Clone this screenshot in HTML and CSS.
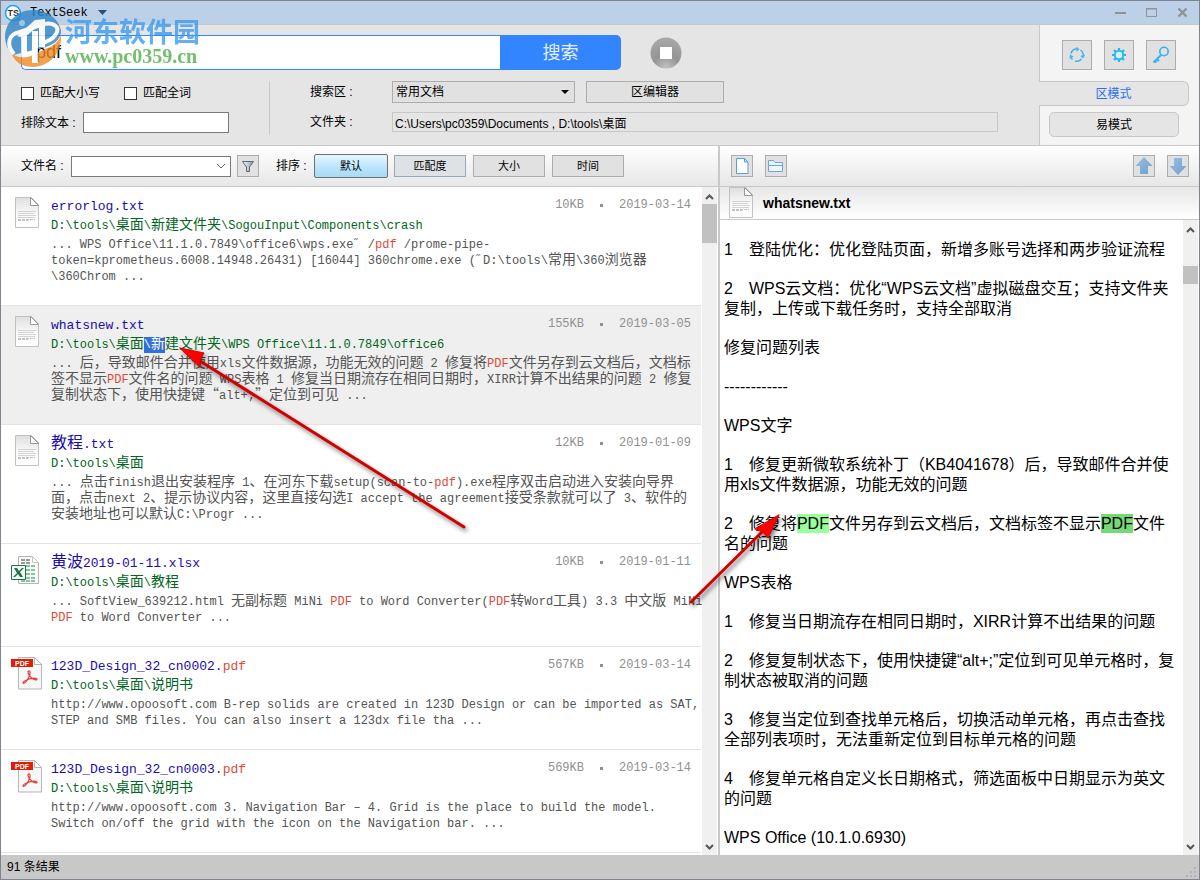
FILE: index.html
```html
<!DOCTYPE html>
<html lang="zh-CN">
<head>
<meta charset="utf-8">
<title>TextSeek</title>
<link rel="stylesheet" href="styles.css">
</head>
<body>
<svg class="defs" width="0" height="0" aria-hidden="true">
  <defs>
    <linearGradient id="paper" x1="0" y1="0" x2="0" y2="1"><stop offset="0" stop-color="#dedede"/><stop offset=".55" stop-color="#fafafa"/><stop offset="1" stop-color="#fff"/></linearGradient>
    <linearGradient id="blueArrow" x1="0" y1="0" x2="1" y2="1"><stop offset="0" stop-color="#9dbfe0"/><stop offset="1" stop-color="#6c9fd0"/></linearGradient>
    <linearGradient id="funnel" x1="0" y1="0" x2="1" y2="0"><stop offset="0" stop-color="#fff"/><stop offset="1" stop-color="#6f96bd"/></linearGradient>
    <radialGradient id="stop" cx=".5" cy="1" r=".9"><stop offset="0" stop-color="#c4c4c4"/><stop offset=".5" stop-color="#949494"/><stop offset="1" stop-color="#a6a6a6"/></radialGradient>
    <symbol id="txt" viewBox="0 0 24 32">
      <path d="M.5.5h16l7 7v23H.5z" fill="url(#paper)" stroke="#c2c2c2"/>
      <path d="M15.500.5v8h8z" fill="#fff" stroke="#999"/>
      <path d="M3 14.500h18M3 16.500h16M3 18.500h18M3 20.500h17" stroke="#d3d3d3"/>
      <path d="M3 22.500h17M3 23.500h10" stroke="#c2c2c2" stroke-dasharray="3 1"/>
    </symbol>
    <symbol id="pdf" viewBox="0 0 31 33">
      <path d="M7.500.5h16l7 7v24.500h-23z" fill="#f8f8f8" stroke="#b5b5b5"/>
      <path d="M23.500.5v7h7z" fill="#fff" stroke="#b5b5b5"/>
      <path d="M0 2h22v8H0z" fill="#df1f05"/>
      <text x="4" y="9" class="pdf-tag">PDF</text>
      <path d="M17 14.500c1.500-1.500 2.500 0 2 2.500-.8 3.500-4 9-6.500 9.500-1.500-.5.500-2.500 3-3.500 3-1.200 8.500-2.500 10.500-1 .5 1.500-2.500 1-4.500-.5-2.500-1.800-4.500-4.500-4.500-7z" fill="none" stroke="#e0443c" stroke-width="1.200"/>
    </symbol>
    <symbol id="xls" viewBox="0 0 28 28">
      <path d="M7.500.5h14l6 6v21h-20z" fill="#fafafa" stroke="#b5b5b5"/>
      <path d="M21.500.5v6h6z" fill="#fff" stroke="#c8c8c8"/>
      <path d="M10 4h10M10 7h10" stroke="#999" stroke-width="2" stroke-dasharray="4 1"/>
      <path d="M15 10h10M15 14h10M15 18h10M10 22h15M10 25h15" stroke="#86c4a0" stroke-width="2" stroke-dasharray="4 1"/>
      <path d="M.5 9.500h14v14H.5z" fill="#f4faf6" stroke="#1f7346"/>
      <path d="M3 12h3l2 3 3-3h2l-4 4 3 5H9l-2-3-3 3H2l4-4z" fill="#1f7346"/>
    </symbol>
  </defs>
</svg>

<div class="window">
  <header class="titlebar">
    <svg class="app-logo" viewBox="0 0 18 18" width="18" height="18" aria-hidden="true"><circle cx="9" cy="9" r="7.500" fill="#fff" stroke="#27a5dd" stroke-width="1.600"/><path d="M13.500 14l3 3" stroke="#27a5dd" stroke-width="2"/><text x="3.500" y="12" class="ts">TS</text></svg>
    <span class="app-name">TextSeek</span>
    <svg width="9" height="5" aria-hidden="true"><path d="M0 0h9L4.500 5z" fill="#24507c"/></svg>
    <div class="win-controls">
      <button type="button" aria-label="最小化"><svg width="12" height="12"><path d="M0 6h11" stroke="#8f9296" stroke-width="2"/></svg></button>
      <button type="button" aria-label="最大化"><svg width="12" height="12"><path d="M.5 1.500h10v8H.5zM0 2h11" fill="none" stroke="#8f9296"/></svg></button>
      <button type="button" aria-label="关闭"><svg width="12" height="12"><path d="M1.500 1.500l8 8M9.500 1.500l-8 8" stroke="#8f9296" stroke-width="2.400"/></svg></button>
    </div>
  </header>

  <section class="top">
    <form class="search">
      <div class="search-row">
        <input class="query" type="text" value="pdf" aria-label="搜索内容">
        <button class="go" type="button">搜索</button>
        <button class="stop" type="button" aria-label="停止"><svg viewBox="0 0 32 32" width="32" height="32"><circle cx="16" cy="16" r="15.500" fill="url(#stop)"/><path d="M10 10h12v12H10z" fill="#fff"/></svg></button>
      </div>
      <div class="options">
        <div class="match">
          <div class="checks">
            <label><input type="checkbox">匹配大小写</label>
            <label><input type="checkbox">匹配全词</label>
          </div>
          <div class="exclude">
            <label for="exclude">排除文本 :</label>
            <input id="exclude" class="box" type="text">
          </div>
        </div>
        <div class="zone">
          <label for="zone">搜索区 :</label>
          <div class="zone-pick">
            <select id="zone"><option>常用文档</option></select>
            <button class="flat editor" type="button">区编辑器</button>
          </div>
          <label for="folder">文件夹 :</label>
          <input id="folder" type="text" readonly value="C:\Users\pc0359\Documents , D:\tools\桌面">
        </div>
      </div>
    </form>
    <aside class="modes">
      <div class="tools">
        <button class="flat" type="button" aria-label="刷新"><svg viewBox="0 0 16 16" width="16" height="16" fill="none" stroke="#35b6f2" stroke-width="1.500"><path d="M2 6.500A6.200 6.200 0 0 1 8.500 2M11.500 3a6.200 6.200 0 0 1 2.500 6.500M12.500 12A6.200 6.200 0 0 1 6 14M3.500 12.500A6.200 6.200 0 0 1 1.800 9"/><path d="M7.500.5L9.500 2.200 7.500 4M15.500 8L14 10.500l-2-1.800M1 11.500L1.500 8.500 4 10" stroke-width="1.200"/></svg></button>
        <button class="flat" type="button" aria-label="设置"><svg viewBox="0 0 16 16" width="16" height="16"><g stroke="#22b4ea" stroke-width="2.200"><path d="M8 1v14M1 8h14M3 3l10 10M13 3L3 13"/></g><circle cx="8" cy="8" r="4.200" fill="#d4f2fc" stroke="#2cbbee" stroke-width="2"/></svg></button>
        <button class="flat" type="button" aria-label="注册"><svg viewBox="0 0 18 18" width="18" height="18" fill="none" stroke="#2fb4f3" stroke-width="1.600"><circle cx="12" cy="5.500" r="4.200"/><path d="M9 9L1.500 16.500M4.500 13l2.500 2M2.500 14l2 2.500" stroke-width="2"/></svg></button>
      </div>
      <button class="mode active" type="button">区模式</button>
      <button class="mode easy" type="button">易模式</button>
    </aside>
  </section>

  <main class="panes">
    <section class="left">
      <div class="toolbar">
        <label for="fname">文件名 :</label>
        <div class="combo"><input id="fname" type="text"><svg width="10" height="6" aria-hidden="true"><path d="M1 1l4 4 4-4" fill="none" stroke="#666"/></svg></div>
        <button class="flat icon filter" type="button" aria-label="筛选"><svg viewBox="0 0 14 14" width="14" height="14"><path d="M1.500 2.500h11L8.500 8v4.500h-3V8z" fill="url(#funnel)" stroke="#666"/></svg></button>
        <span class="sort-label">排序 :</span>
        <div class="sorts">
          <button class="flat sort on" type="button">默认</button>
          <button class="flat sort match-sort" type="button">匹配度</button>
          <button class="flat sort" type="button">大小</button>
          <button class="flat sort" type="button">时间</button>
        </div>
      </div>
      <div class="scroller">
        <div class="results">
          <article class="item">
            <svg class="ficon txt" aria-hidden="true"><use href="#txt"/></svg>
            <div class="body">
              <div class="head"><a href="#">errorlog.txt</a><span class="meta"><span>10KB</span><i></i><span>2019-03-14</span></span></div>
              <div class="path">D:\tools\<span class="zh">桌面</span>\<span class="zh">新建文件夹</span>\SogouInput\Components\crash</div>
              <p>... WPS Office\11.1.0.7849\office6\wps.exe˝ /<em>pdf</em> /prome-pipe-<br>token=kprometheus.6008.14948.26431) [16044] 360chrome.exe (˝D:\tools\<span class="zh">常用</span>\360<span class="zh">浏览器</span><br>\360Chrom ...</p>
            </div>
          </article>
          <article class="item current">
            <svg class="ficon txt" aria-hidden="true"><use href="#txt"/></svg>
            <div class="body">
              <div class="head"><a href="#">whatsnew.txt</a><span class="meta"><span>155KB</span><i></i><span>2019-03-05</span></span></div>
              <div class="path">D:\tools\<span class="zh">桌面</span><mark>\<span class="zh">新</span></mark><span class="zh">建文件夹</span>\WPS Office\11.1.0.7849\office6</div>
              <p>... <span class="zh">后，导致邮件合并使用</span>xls<span class="zh">文件数据源，功能无效的问题</span> 2 <span class="zh">修复将</span><em>PDF</em><span class="zh">文件另存到云文档后，文档标</span><br><span class="zh">签不显示</span><em>PDF</em><span class="zh">文件名的问题</span> WPS<span class="zh">表格</span> 1 <span class="zh">修复当日期流存在相同日期时，</span>XIRR<span class="zh">计算不出结果的问题</span> 2 <span class="zh">修复</span><br><span class="zh">复制状态下，使用快捷键“</span>alt+;<span class="zh">”定位到可见</span> ...</p>
            </div>
          </article>
          <article class="item">
            <svg class="ficon txt" aria-hidden="true"><use href="#txt"/></svg>
            <div class="body">
              <div class="head"><a href="#"><span class="zh">教程</span>.txt</a><span class="meta"><span>12KB</span><i></i><span>2019-01-09</span></span></div>
              <div class="path">D:\tools\<span class="zh">桌面</span></div>
              <p>... <span class="zh">点击</span>finish<span class="zh">退出安装程序</span> 1<span class="zh">、在河东下载</span>setup(scan-to-<em>pdf</em>).exe<span class="zh">程序双击启动进入安装向导界</span><br><span class="zh">面，点击</span>next 2<span class="zh">、提示协议内容，这里直接勾选</span>I accept the agreement<span class="zh">接受条款就可以了</span> 3<span class="zh">、软件的</span><br><span class="zh">安装地址也可以默认</span>C:\Progr ...</p>
            </div>
          </article>
          <article class="item">
            <svg class="ficon xls" aria-hidden="true"><use href="#xls"/></svg>
            <div class="body">
              <div class="head"><a href="#"><span class="zh">黄波</span>2019-01-11.xlsx</a><span class="meta"><span>10KB</span><i></i><span>2019-01-11</span></span></div>
              <div class="path">D:\tools\<span class="zh">桌面</span>\<span class="zh">教程</span></div>
              <p>... SoftView_639212.html <span class="zh">无副标题</span> MiNi <em>PDF</em> to Word Converter(<em>PDF</em><span class="zh">转</span>Word<span class="zh">工具</span>) 3.3 <span class="zh">中文版</span> MiNi<br><em>PDF</em> to Word Converter ...</p>
            </div>
          </article>
          <article class="item">
            <svg class="ficon pdf" aria-hidden="true"><use href="#pdf"/></svg>
            <div class="body">
              <div class="head"><a href="#">123D_Design_32_cn0002.<em>pdf</em></a><span class="meta"><span>567KB</span><i></i><span>2019-03-14</span></span></div>
              <div class="path">D:\tools\<span class="zh">桌面</span>\<span class="zh">说明书</span></div>
              <p>http://www.opoosoft.com B-rep solids are created in 123D Design or can be imported as SAT,<br>STEP and SMB files. You can also insert a 123dx file tha ...</p>
            </div>
          </article>
          <article class="item">
            <svg class="ficon pdf" aria-hidden="true"><use href="#pdf"/></svg>
            <div class="body">
              <div class="head"><a href="#">123D_Design_32_cn0003.<em>pdf</em></a><span class="meta"><span>569KB</span><i></i><span>2019-03-14</span></span></div>
              <div class="path">D:\tools\<span class="zh">桌面</span>\<span class="zh">说明书</span></div>
              <p>http://www.opoosoft.com 3. Navigation Bar – 4. Grid is the place to build the model.<br>Switch on/off the grid with the icon on the Navigation bar. ...</p>
            </div>
          </article>
        </div>
        <div class="bar" aria-hidden="true">
          <svg width="9" height="6"><path d="M1 5l3.500-3.500L8 5" fill="none" stroke="#555" stroke-width="2"/></svg>
          <div class="thumb tall"></div>
          <svg width="9" height="6"><path d="M1 1l3.500 3.500L8 1" fill="none" stroke="#555" stroke-width="2"/></svg>
        </div>
      </div>
    </section>

    <section class="right">
      <div class="toolbar preview-tools">
        <button class="flat icon" type="button" aria-label="打开文件"><svg viewBox="0 0 14 16" width="14" height="16"><path d="M1.500.5h8l3.500 3.500v11.500H1.500zM9.500.5v3.500h3.500" fill="#fff" stroke="#559bf0"/></svg></button>
        <button class="flat icon" type="button" aria-label="打开文件夹"><svg viewBox="0 0 16 14" width="16" height="14"><path d="M.5 12.500v-11h5l1.500 2h7.500v9zM.5 6.500h14" fill="#f0f5fb" stroke="#6ba6ec"/></svg></button>
        <button class="flat icon push" type="button" aria-label="上一个"><svg viewBox="0 0 18 18" width="18" height="18"><path d="M9 0l8.500 9H13v8H5V9H.5z" fill="url(#blueArrow)"/></svg></button>
        <button class="flat icon" type="button" aria-label="下一个"><svg viewBox="0 0 18 18" width="18" height="18"><path d="M9 18L.5 9H5V1h8v8h4.500z" fill="url(#blueArrow)"/></svg></button>
      </div>
      <div class="doc-head">
        <svg class="ficon txt" aria-hidden="true"><use href="#txt"/></svg>
        <h1>whatsnew.txt</h1>
      </div>
      <div class="scroller">
        <div class="doc">
          <p>1　登陆优化：优化登陆页面，新增多账号选择和两步验证流程</p>
          <p>2　WPS云文档：优化“WPS云文档”虚拟磁盘交互；支持文件夹<br>复制，上传或下载任务时，支持全部取消</p>
          <p>修复问题列表</p>
          <p>------------</p>
          <p>WPS文字</p>
          <p>1　修复更新微软系统补丁（KB4041678）后，导致邮件合并使<br>用xls文件数据源，功能无效的问题</p>
          <p>2　修复将<mark>PDF</mark>文件另存到云文档后，文档标签不显示<mark class="deep">PDF</mark>文件<br>名的问题</p>
          <p>WPS表格</p>
          <p>1　修复当日期流存在相同日期时，XIRR计算不出结果的问题</p>
          <p>2　修复复制状态下，使用快捷键“alt+;”定位到可见单元格时，复<br>制状态被取消的问题</p>
          <p>3　修复当定位到查找单元格后，切换活动单元格，再点击查找<br>全部列表项时，无法重新定位到目标单元格的问题</p>
          <p>4　修复单元格自定义长日期格式，筛选面板中日期显示为英文<br>的问题</p>
          <p>WPS Office (10.1.0.6930)</p>
        </div>
        <div class="bar" aria-hidden="true">
          <svg width="9" height="6"><path d="M1 5l3.500-3.500L8 5" fill="none" stroke="#555" stroke-width="2"/></svg>
          <div class="thumb low"></div>
          <svg width="9" height="6"><path d="M1 1l3.500 3.500L8 1" fill="none" stroke="#555" stroke-width="2"/></svg>
        </div>
      </div>
    </section>
  </main>

  <footer class="status"><span>91 条结果</span>
    <svg width="10" height="10" aria-hidden="true"><path d="M8 0h2v2H8zM8 4h2v2H8zM4 4h2v2H4zM0 8h2v2H0zM4 8h2v2H4zM8 8h2v2H8z" fill="#b4b4b4"/></svg>
  </footer>
</div>

<div class="watermark">
  <svg viewBox="0 0 58 60" width="58" height="60" aria-hidden="true">
    <path d="M1 27C2 12 14 1 29 1c14 0 25 8 28 20 1 9-8 16-19 18L9 46C4 41 1 35 1 27z" fill="#2f86c6"/>
    <path d="M57 26c1 17-10 31-28 32-11 0-18-5-22-14 8 6 16 5 22 2l12-6c9-3 14-8 16-14z" fill="#f08a24"/>
    <path d="M10 45C2 36 4 25 16 23l24-8c11-2 16 4 12 10-3 5-9 8-15 9" fill="none" stroke="#fff" stroke-width="4"/>
    <path d="M20 24v24M31 22v32M38 12v26" fill="none" stroke="#fff" stroke-width="6"/>
    <path d="M13 27L31 11l10-1v6h-6L20 29z" fill="#fff"/>
    <circle cx="18" cy="14" r="3" fill="#8cc6ee"/>
  </svg>
  <div><div class="wm-name">河东软件园</div><div class="wm-url">www.pc0359.cn</div></div>
</div>
<svg class="arrows" width="800" height="640" aria-hidden="true">
  <g class="arrow"><path d="M464 527L200 361" /><path class="tip" d="M180 348l24 5-4 7 0 7z"/></g>
  <g class="arrow"><path d="M691 602L763 531"/><path class="tip" d="M779 515l-11 23-5-6-8-3z"/></g>
</svg>
</body>
</html>
```
FILE: styles.css
```css
* { box-sizing: border-box; }
html, body { height: 100%; margin: 0; }
body {
  font: 12px/16px "Liberation Sans", "Noto Sans CJK SC", sans-serif;
  color: #000;
  overflow: hidden;
}
button, input, select { font: inherit; color: inherit; margin: 0; }
button { padding: 0; }
svg { display: block; flex: none; }
.defs { position: absolute; }
.pdf-tag { font: bold 7px "Liberation Sans", sans-serif; fill: #fff; }
.ts { font: bold 9px "Liberation Sans", sans-serif; fill: #333; }

.window {
  height: 100%;
  display: flex;
  flex-direction: column;
  border: 1px solid #80848f;
  background: #fff;
}

/* title bar */
.titlebar {
  display: flex;
  align-items: center;
  height: 24px;
  padding: 0 10px 0 3px;
  background: #bcd1e7;
  border-bottom: 1px solid #c8c8c8;
}
.app-name { font: 12px/14px "Liberation Mono", monospace; margin: 0 10px 0 8px; }
.win-controls { display: flex; gap: 19px; margin-left: auto; }
.win-controls button { border: 0; background: none; }

/* search panel */
.top {
  display: flex;
  height: 121px;
  background: #e5e5e5;
  border-bottom: 1px solid #c8c8c8;
}
.search { flex: 1; min-width: 0; padding: 10px 41px 0 20px; }
.search-row { display: flex; align-items: center; }
.query {
  width: 479px;
  height: 35px;
  padding: 0 14px;
  border: 1px solid #3385ff;
  border-right: 0;
  border-radius: 5px 0 0 5px;
  background: #fff;
  font-size: 18px;
}
.go {
  width: 121px;
  height: 35px;
  border: 0;
  border-radius: 0 5px 5px 0;
  background: #3385ff;
  color: #e6f0ff;
  font-size: 18px;
}
.stop { border: 0; background: none; margin-left: 29px; }
.options { display: flex; margin-top: 11px; }
.match {
  width: 249px;
  padding-top: 4px;
  border-right: 1px solid #c8c8c8;
  height: 54px;
  margin-right: 40px;
}
.checks { display: flex; gap: 24px; height: 16px; }
.checks label { display: flex; align-items: center; gap: 6px; }
.checks input {
  appearance: none;
  width: 13px;
  height: 13px;
  border: 1px solid #333;
  background: #fff;
}
.exclude { display: flex; align-items: center; gap: 8px; margin-top: 11px; }
.exclude label { width: 54px; white-space: nowrap; }
.box { width: 146px; height: 21px; border: 1px solid #7a7a7a; background: #fff; }
.zone {
  flex: 1;
  display: grid;
  grid-template-columns: 82px minmax(0, 1fr);
  grid-template-rows: 22px 20px;
  row-gap: 9px;
  align-items: center;
}
.zone-pick { display: flex; gap: 11px; }
.zone select {
  appearance: none;
  width: 183px;
  height: 22px;
  padding: 0 3px;
  border: 1px solid #adadad;
  border-radius: 0;
  background: #e1e1e1 url("data:image/svg+xml,%3Csvg xmlns='http://www.w3.org/2000/svg' width='8' height='4'%3E%3Cpath d='M0 0h8L4 4z'/%3E%3C/svg%3E") no-repeat right 5px center;
}
#folder {
  width: 100%;
  height: 20px;
  padding: 0 2px;
  border: 1px solid #c8c8c8;
  background: #e5e5e5;
}
.flat {
  display: flex;
  align-items: center;
  justify-content: center;
  border: 1px solid #adadad;
  background: #e1e1e1;
}
.editor { width: 138px; height: 22px; }

.modes { width: 160px; background: #f4f4f4; border-left: 1px solid #c8c8c8; }
.tools { display: flex; gap: 12px; padding: 15px 0 11px 22px; }
.tools .flat { width: 30px; height: 30px; }
.mode {
  display: block;
  height: 25px;
  border: 1px solid #c8c8c8;
  background: #e5e5e5;
}
.active {
  width: 150px;
  margin-left: -1px;
  border-left: 0;
  border-radius: 0 6px 6px 0;
  color: #2b6ff0;
}
.easy { width: 130px; margin: 6px 0 0 9px; border-radius: 5px; }

/* panes */
.panes {
  flex: 1;
  min-height: 0;
  display: grid;
  grid-template-columns: minmax(0, 719fr) minmax(0, 479fr);
}
.left, .right { display: flex; flex-direction: column; min-height: 0; }
.left { border-right: 2px solid #c8c8c8; }
.toolbar {
  display: flex;
  align-items: center;
  height: 41px;
  flex: none;
  padding: 0 20px;
  background: linear-gradient(#fff, #e7e7e7);
  border-bottom: 1px solid #c8c8c8;
}
.toolbar label { width: 50px; }
.combo {
  display: flex;
  align-items: center;
  width: 160px;
  height: 21px;
  padding-right: 4px;
  border: 1px solid #7a7a7a;
  background: #fff;
}
.combo input { flex: 1; min-width: 0; border: 0; background: none; }
.icon { width: 22px; height: 22px; }
.filter { margin: 0 17px 0 6px; }
.sort-label { width: 38px; }
.sorts { display: flex; align-items: center; gap: 7px; }
.sort { width: 72px; height: 22px; font-size: 11px; }
.on {
  width: 74px;
  height: 24px;
  margin-right: -1px;
  border-color: #707070;
  border-radius: 2px;
  background: linear-gradient(#eaf6fd, #bee6fd 50%, #a7d9f5);
}
.match-sort { border-color: #98a8b6; background: #dfe2e5; }
.preview-tools { gap: 12px; padding: 0 10px 0 11px; }
.push { margin-left: auto; }

.scroller { flex: 1; display: flex; min-height: 0; }
.results, .doc { flex: 1; min-width: 0; overflow: hidden; }
.bar {
  flex: none;
  width: 15px;
  margin-right: 1px;
  display: flex;
  flex-direction: column;
  align-items: center;
  padding: 7px 0 5px;
  background: #f0f0f0;
}
.bar svg:last-child { margin-top: auto; }
.thumb { width: 100%; background: #c1c1c1; }
.tall { height: 39px; margin-top: 4px; }
.low { height: 18px; margin-top: 33px; }

/* results */
.item {
  display: flex;
  padding: 10px 10px 20px 10px;
  margin-right: 1px;
  border-bottom: 1px solid #e4e4e4;
}
.current { background: #efefef; }
.ficon { margin-right: 11px; }
.ficon.txt { width: 24px; height: 32px; margin-left: 4px; margin-right: 12px; }
.ficon.xls { width: 28px; height: 28px; margin: 2px 12px 0 0; }
.ficon.pdf { width: 31px; height: 33px; margin-right: 9px; }
.body {
  flex: 1;
  min-width: 0;
  font: 12px/16px "Liberation Mono", "Noto Sans CJK SC", monospace;
  white-space: nowrap;
}
.zh { font-family: "Noto Sans CJK SC", sans-serif; font-size: 14px; line-height: 0; }
.head { display: flex; justify-content: space-between; height: 20px; line-height: 20px; }
.head a { font-size: 13px; color: #1a0dab; text-decoration: none; }
.head .zh { font-size: 16px; }
.meta { display: flex; align-items: center; height: 16px; gap: 16px; color: #909090; }
.meta i { width: 3px; height: 3px; background: #909090; }
.path { height: 19px; line-height: 19px; margin-bottom: 1px; color: #006621; }
.item p { margin: 0; color: #545454; }
.item em { font-style: normal; color: #dd4b39; }
.path mark { padding: 1px 0; color: #fff; background: #3170d6; }

/* preview */
.doc-head {
  display: flex;
  align-items: center;
  height: 33px;
  flex: none;
  padding-left: 5px;
  background: linear-gradient(#e7e7e7, #fff);
  border-bottom: 1px solid #c8c8c8;
}
.doc-head .ficon { margin-right: 10px; }
.doc-head h1 { margin: 0; font-size: 14px; line-height: 20px; }
.doc { padding: 20px 0 0 4px; font-size: 16px; line-height: 20px; white-space: nowrap; }
.doc p { margin: 0 0 19px; }
.doc mark { padding: 1px 0; color: #000; background: #9f9; }
.doc .deep { background: #76d976; }

.status {
  display: flex;
  align-items: center;
  justify-content: space-between;
  height: 24px;
  padding: 0 3px 0 6px;
  background: #c8c8c8;
}
.status svg { align-self: flex-end; margin-bottom: 2px; }

/* overlays */
.watermark { position: absolute; left: 4px; top: 9px; display: flex; gap: 3px; opacity: .8; pointer-events: none; }
.wm-name { font: bold 27px/27px "Noto Sans CJK SC", sans-serif; color: #3b9cf0; margin-top: 8px; }
.wm-url { font: bold 20px/20px "Liberation Serif", serif; color: #4fb04a; margin-top: 2px; }
.arrows { position: absolute; left: 0; top: 0; pointer-events: none; }
.arrow { filter: drop-shadow(2px 3px 2px rgba(0, 0, 0, .5)); stroke: #d40000; stroke-width: 3; stroke-linecap: round; }
.tip { fill: #f00; stroke-width: 1; }
```
